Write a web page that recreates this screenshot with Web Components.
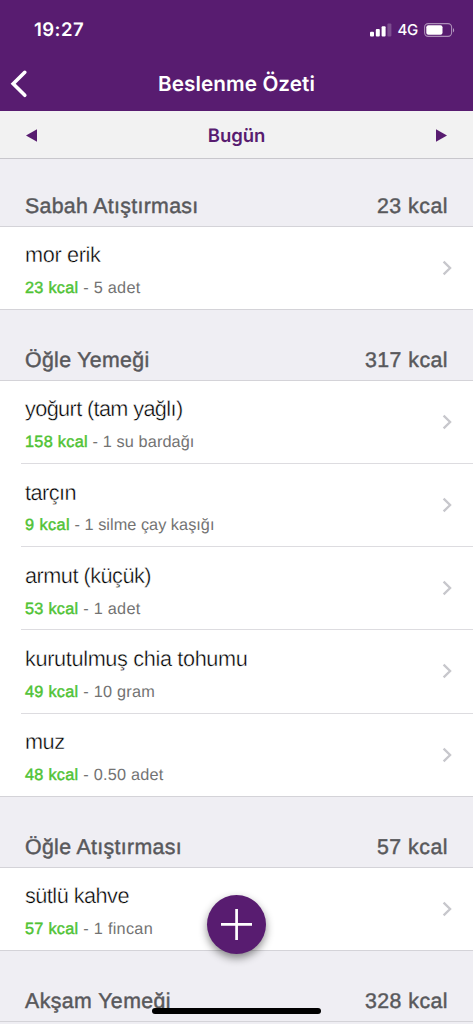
<!DOCTYPE html>
<html lang="tr">
<head>
<meta charset="utf-8">
<title>Beslenme Özeti</title>
<style>
html,body{margin:0;height:1024px;overflow:hidden;background:#efeef3}
body{font-family:"Liberation Sans",Arial,sans-serif;font-kerning:normal;text-rendering:geometricPrecision}
</style>
</head>
<body>
<nutrition-app></nutrition-app>
<script>
const define = (name, html, setup) => customElements.define(name, class extends HTMLElement {
  connectedCallback() {
    if (this.shadowRoot) return;
    const t = document.createElement('template');
    t.innerHTML = html;
    this.attachShadow({mode: 'open'}).append(t.content.cloneNode(true));
    if (setup) setup(this, this.shadowRoot);
  }
});

// A single line of text, tracked so that it fills the given width.
define('fit-text', `<style>:host{display:inline-block;white-space:pre}span{display:inline-block}</style><span><slot></slot></span>`, (el, root) => {
  const span = root.querySelector('span');
  const w = parseFloat(el.getAttribute('w'));
  if (!w) return;
  const n = el.textContent.length;
  const gap = (w - span.getBoundingClientRect().width) / n;
  span.style.letterSpacing = gap.toFixed(3) + 'px';
});

define('status-bar', `<style>
:host{display:flex;height:56px;box-sizing:border-box;padding:3px 18px 0 34px;align-items:center;justify-content:space-between;color:#fff;font-family:Inter,sans-serif}
.time{font-size:18.5px;font-weight:600;line-height:24px}
.right{display:flex;align-items:center}
.net{font-size:15px;font-weight:500;line-height:20px;margin:0 6px 0 5px}
svg{display:block}
</style>
<fit-text class="time" w="50">19:27</fit-text>
<div class="right">
<svg width="23" height="14" viewBox="0 0 23 14"><g fill="#fff"><rect x="1" y="8.7" width="4" height="4.8" rx="1"/><rect x="6.8" y="6" width="4" height="7.5" rx="1"/><rect x="12.6" y="3.2" width="4" height="10.3" rx="1"/><rect x="18.4" y=".5" width="4" height="13" rx="1" opacity=".22"/></g></svg>
<fit-text class="net" w="20.6">4G</fit-text>
<svg width="31" height="14" viewBox="0 0 31 14"><rect x=".6" y=".6" width="27" height="12.8" rx="3.6" fill="none" stroke="#fff" stroke-opacity=".5" stroke-width="1.1"/><rect x="2.3" y="2.3" width="16.2" height="9.4" rx="2" fill="#fff"/><path d="M29 5v4.4c1.6-.7 1.6-3.7 0-4.4z" fill="#fff" opacity=".55"/></svg>
</div>`);

define('nav-bar', `<style>
:host{display:grid;grid-template-columns:60px 1fr 60px;height:55px;align-items:center;color:#fff}
.title{justify-self:center;font:600 20.7px/28px Inter,sans-serif;margin-top:.6px}
svg{display:block;margin-left:9px}
</style>
<svg width="20" height="30" viewBox="0 0 20 30"><path d="M15.8 3.3 4.2 14.8 15.8 26.3" fill="none" stroke="#fff" stroke-width="3.6" stroke-linecap="round" stroke-linejoin="miter"/></svg>
<fit-text class="title" w="157">Beslenme Özeti</fit-text>`);

define('day-picker', `<style>
:host{display:flex;height:48px;box-sizing:border-box;border-bottom:1px solid #c8c7cc;background:#f2f2f2;padding:0 26px;align-items:center;justify-content:space-between;color:#581c70}
.day{font:600 18.5px/24px Inter,sans-serif;margin-top:3px}
svg{display:block;margin-top:1px}
</style>
<svg width="11" height="13" viewBox="0 0 11 13"><path d="M0 6.5 11 .3v12.4z" fill="currentColor"/></svg>
<fit-text class="day" w="57.5">Bugün</fit-text>
<svg width="11" height="13" viewBox="0 0 11 13"><path d="M11 6.5 0 .3v12.4z" fill="currentColor"/></svg>`);

define('meal-header', `<style>
:host{display:flex;height:71px;box-sizing:border-box;border-bottom:1px solid #d4d3d8;background:#efeef3;padding:0 25px 5px;align-items:flex-end;justify-content:space-between;font-size:21.3px;line-height:30px;color:#58585b;-webkit-text-stroke:.45px #58585b}
:host([first]){height:68px}
</style><slot></slot>`);

define('food-row', `<style>
:host{display:flex;height:83.15px;background:#fff;box-sizing:border-box;align-items:stretch}
:host([first]){height:83px}
.in{flex:1;display:flex;align-items:center;justify-content:space-between;margin-left:21px;padding:0 21px 0 4px;border-bottom:1px solid #dddce0}
:host([last]) .in{margin-left:0;padding-left:25px;border-color:#d4d3d8}
.txt{align-self:flex-start;padding-top:13.4px}
.name{font-size:21.7px;line-height:30px;color:#000;-webkit-text-stroke:.4px #fff;height:30px}
.sub{font-size:16.3px;line-height:24px;margin-top:5.9px;color:#737373;height:24px;white-space:pre}
.kcal{color:#50c335;-webkit-text-stroke:.45px #50c335}
svg{display:block}
</style>
<div class="in"><div class="txt"><div class="name"></div><div class="sub"></div></div>
<svg width="10" height="16" viewBox="0 0 10 16"><path d="M1.6 1.6 8.1 8 1.6 14.4" fill="none" stroke="#c7c7cc" stroke-width="2.3"/></svg></div>`, (el, root) => {
  const [nw, kw, aw] = el.getAttribute('widths').split(' ');
  const make = (text, w, cls = '') => {
    const f = document.createElement('fit-text');
    f.textContent = text; f.setAttribute('w', w); f.className = cls;
    return f;
  };
  root.querySelector('.name').append(make(el.getAttribute('name'), nw));
  root.querySelector('.sub').append(make(el.getAttribute('kcal') + ' kcal', kw, 'kcal'), make(' - ' + el.getAttribute('amount'), aw));
});

define('add-button', `<style>
:host{position:absolute;left:207px;top:895px;width:59px;height:59px;border-radius:50%;background:#581c70;box-shadow:0 4px 9px rgba(0,0,0,.45)}
svg{display:block}
</style><svg width="59" height="59" viewBox="0 0 59 59"><path d="M29.6 14v31M14 29.4h31" stroke="#fff" stroke-width="2.7"/></svg>`);

define('home-indicator', `<style>:host{position:absolute;left:152px;top:1007.5px;width:169px;height:6px;border-radius:3px;background:#000}</style>`);

define('nutrition-app', `<style>
:host{display:block;position:relative;width:473px;height:1024px;overflow:hidden;background:#efeef3}
.top{background:#581c70;height:111px}
</style>
<div class="top"><status-bar></status-bar><nav-bar></nav-bar></div>
<day-picker></day-picker>
<meal-header first><fit-text w="173.5">Sabah Atıştırması</fit-text><fit-text w="71">23 kcal</fit-text></meal-header>
<food-row first last name="mor erik" kcal="23" amount="5 adet" widths="75.5 53.5 62"></food-row>
<meal-header><fit-text w="124.5">Öğle Yemeği</fit-text><fit-text w="83">317 kcal</fit-text></meal-header>
<food-row name="yoğurt (tam yağlı)" kcal="158" amount="1 su bardağı" widths="157.5 63 106.5"></food-row>
<food-row name="tarçın" kcal="9" amount="1 silme çay kaşığı" widths="51 45 144.5"></food-row>
<food-row name="armut (küçük)" kcal="53" amount="1 adet" widths="126 53.5 62"></food-row>
<food-row name="kurutulmuş chia tohumu" kcal="49" amount="10 gram" widths="222.5 53.5 76.5"></food-row>
<food-row last name="muz" kcal="48" amount="0.50 adet" widths="39.5 53.5 85"></food-row>
<meal-header><fit-text w="157">Öğle Atıştırması</fit-text><fit-text w="71">57 kcal</fit-text></meal-header>
<food-row last name="sütlü kahve" kcal="57" amount="1 fincan" widths="104 53.5 74.5"></food-row>
<meal-header><fit-text w="146">Akşam Yemeği</fit-text><fit-text w="83">328 kcal</fit-text></meal-header>
<add-button></add-button>
<home-indicator></home-indicator>`);
</script>
</body>
</html>
